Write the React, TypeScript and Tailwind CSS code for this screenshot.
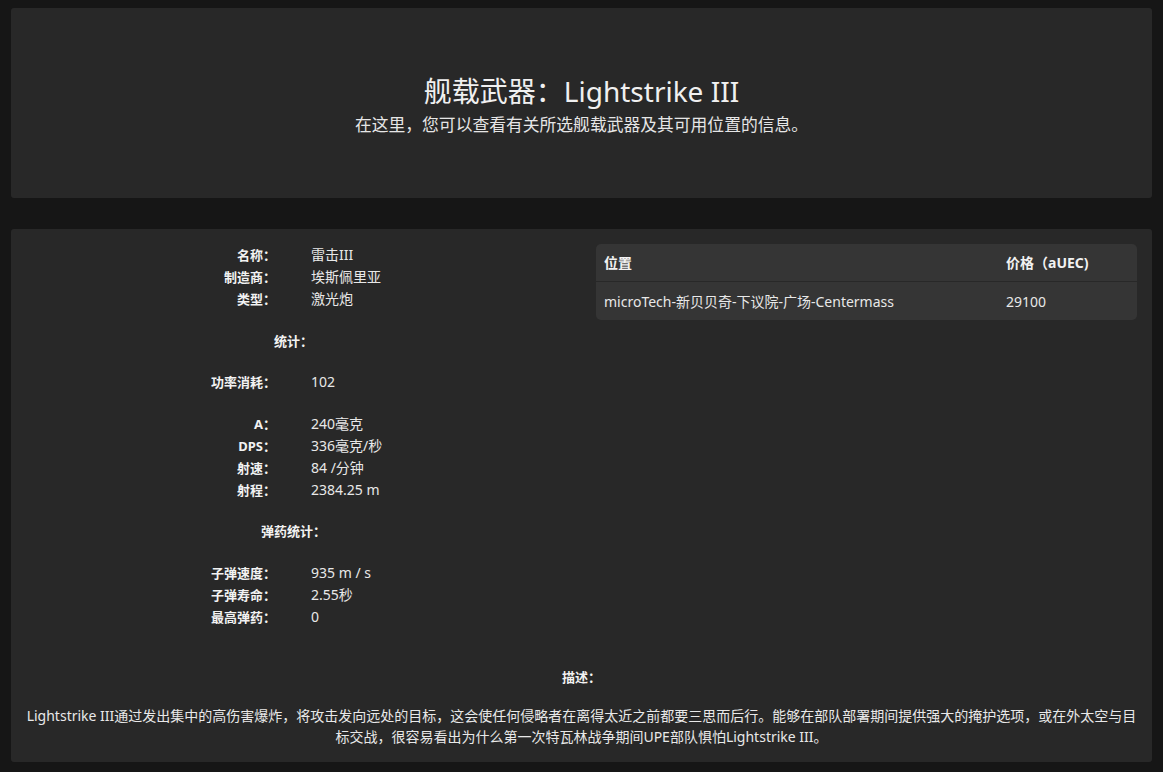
import React from "react";

type Row = { label: string; value: string };

const basicInfo: Row[] = [
  { label: "名称：", value: "雷击III" },
  { label: "制造商：", value: "埃斯佩里亚" },
  { label: "类型：", value: "激光炮" },
];

const power: Row[] = [{ label: "功率消耗：", value: "102" }];

const damage: Row[] = [
  { label: "A：", value: "240毫克" },
  { label: "DPS：", value: "336毫克/秒" },
  { label: "射速：", value: "84 /分钟" },
  { label: "射程：", value: "2384.25 m" },
];

const ammo: Row[] = [
  { label: "子弹速度：", value: "935 m / s" },
  { label: "子弹寿命：", value: "2.55秒" },
  { label: "最高弹药：", value: "0" },
];

const locations = [
  { place: "microTech-新贝贝奇-下议院-广场-Centermass", price: "29100" },
];

function StatGroup({ rows }: { rows: Row[] }) {
  return (
    <div className="grid grid-cols-2 gap-x-[35px]">
      {rows.map((r) => (
        <React.Fragment key={r.label}>
          <div className="text-right text-[13px] font-bold leading-[22px] text-[#f2f2f2]">{r.label}</div>
          <div className="text-left text-[14px] leading-[22px] text-[#e8e8e8]">{r.value}</div>
        </React.Fragment>
      ))}
    </div>
  );
}

function GroupTitle({ children }: { children: React.ReactNode }) {
  return <div className="text-center text-[13px] font-bold leading-[22px] text-[#f2f2f2]">{children}</div>;
}

export default function App() {
  return (
    <div className="min-h-screen bg-[#161616] px-[11px] pt-[8px] pb-[11px] font-['Noto_Sans','Noto_Sans_CJK_SC',sans-serif] text-[#eeeeee]">
      {/* Page header */}
      <section className="flex h-[190px] flex-col items-center justify-center rounded-[3px] bg-[#282828] pt-[2px]">
        <h1 className="text-[28px] leading-[36px] font-normal text-[#f0f0f0]">舰载武器：Lightstrike III</h1>
        <p className="mt-[5px] text-[16.8px] leading-[22px] text-[#e6e6e6]">在这里，您可以查看有关所选舰载武器及其可用位置的信息。</p>
      </section>

      {/* Weapon details */}
      <section className="mt-[31px] rounded-[3px] bg-[#282828] px-[15px] pt-[15px] pb-[14px]">
        <div className="flex items-start">
          <div className="flex w-[535px] shrink-0 flex-col gap-[19.5px]">
            <StatGroup rows={basicInfo} />
            <GroupTitle>统计：</GroupTitle>
            <StatGroup rows={power} />
            <StatGroup rows={damage} />
            <GroupTitle>弹药统计：</GroupTitle>
            <StatGroup rows={ammo} />
          </div>

          <div className="ml-[35px] flex-1 overflow-hidden rounded-[5px] bg-[#353535] text-[14px]">
            <div className="grid h-[38px] grid-cols-[1fr_139px] items-center border-b border-[#282828] font-bold text-[#f2f2f2]">
              <div className="pl-[8px]">位置</div>
              <div className="pl-[8px]">价格（aUEC)</div>
            </div>
            {locations.map((l) => (
              <div key={l.place} className="grid h-[38px] grid-cols-[1fr_139px] items-center text-[#e8e8e8]">
                <div className="pl-[8px]">{l.place}</div>
                <div className="pl-[8px]">{l.price}</div>
              </div>
            ))}
          </div>
        </div>

        <div className="mt-[38px]">
          <GroupTitle>描述：</GroupTitle>
          <p className="mt-[17px] text-center text-[14px] leading-[21.5px] text-[#e8e8e8]">
            Lightstrike III通过发出集中的高伤害爆炸，将攻击发向远处的目标，这会使任何侵略者在离得太近之前都要三思而后行。能够在部队部署期间提供强大的掩护选项，或在外太空与目标交战，很容易看出为什么第一次特瓦林战争期间UPE部队惧怕Lightstrike III。
          </p>
        </div>
      </section>
    </div>
  );
}
